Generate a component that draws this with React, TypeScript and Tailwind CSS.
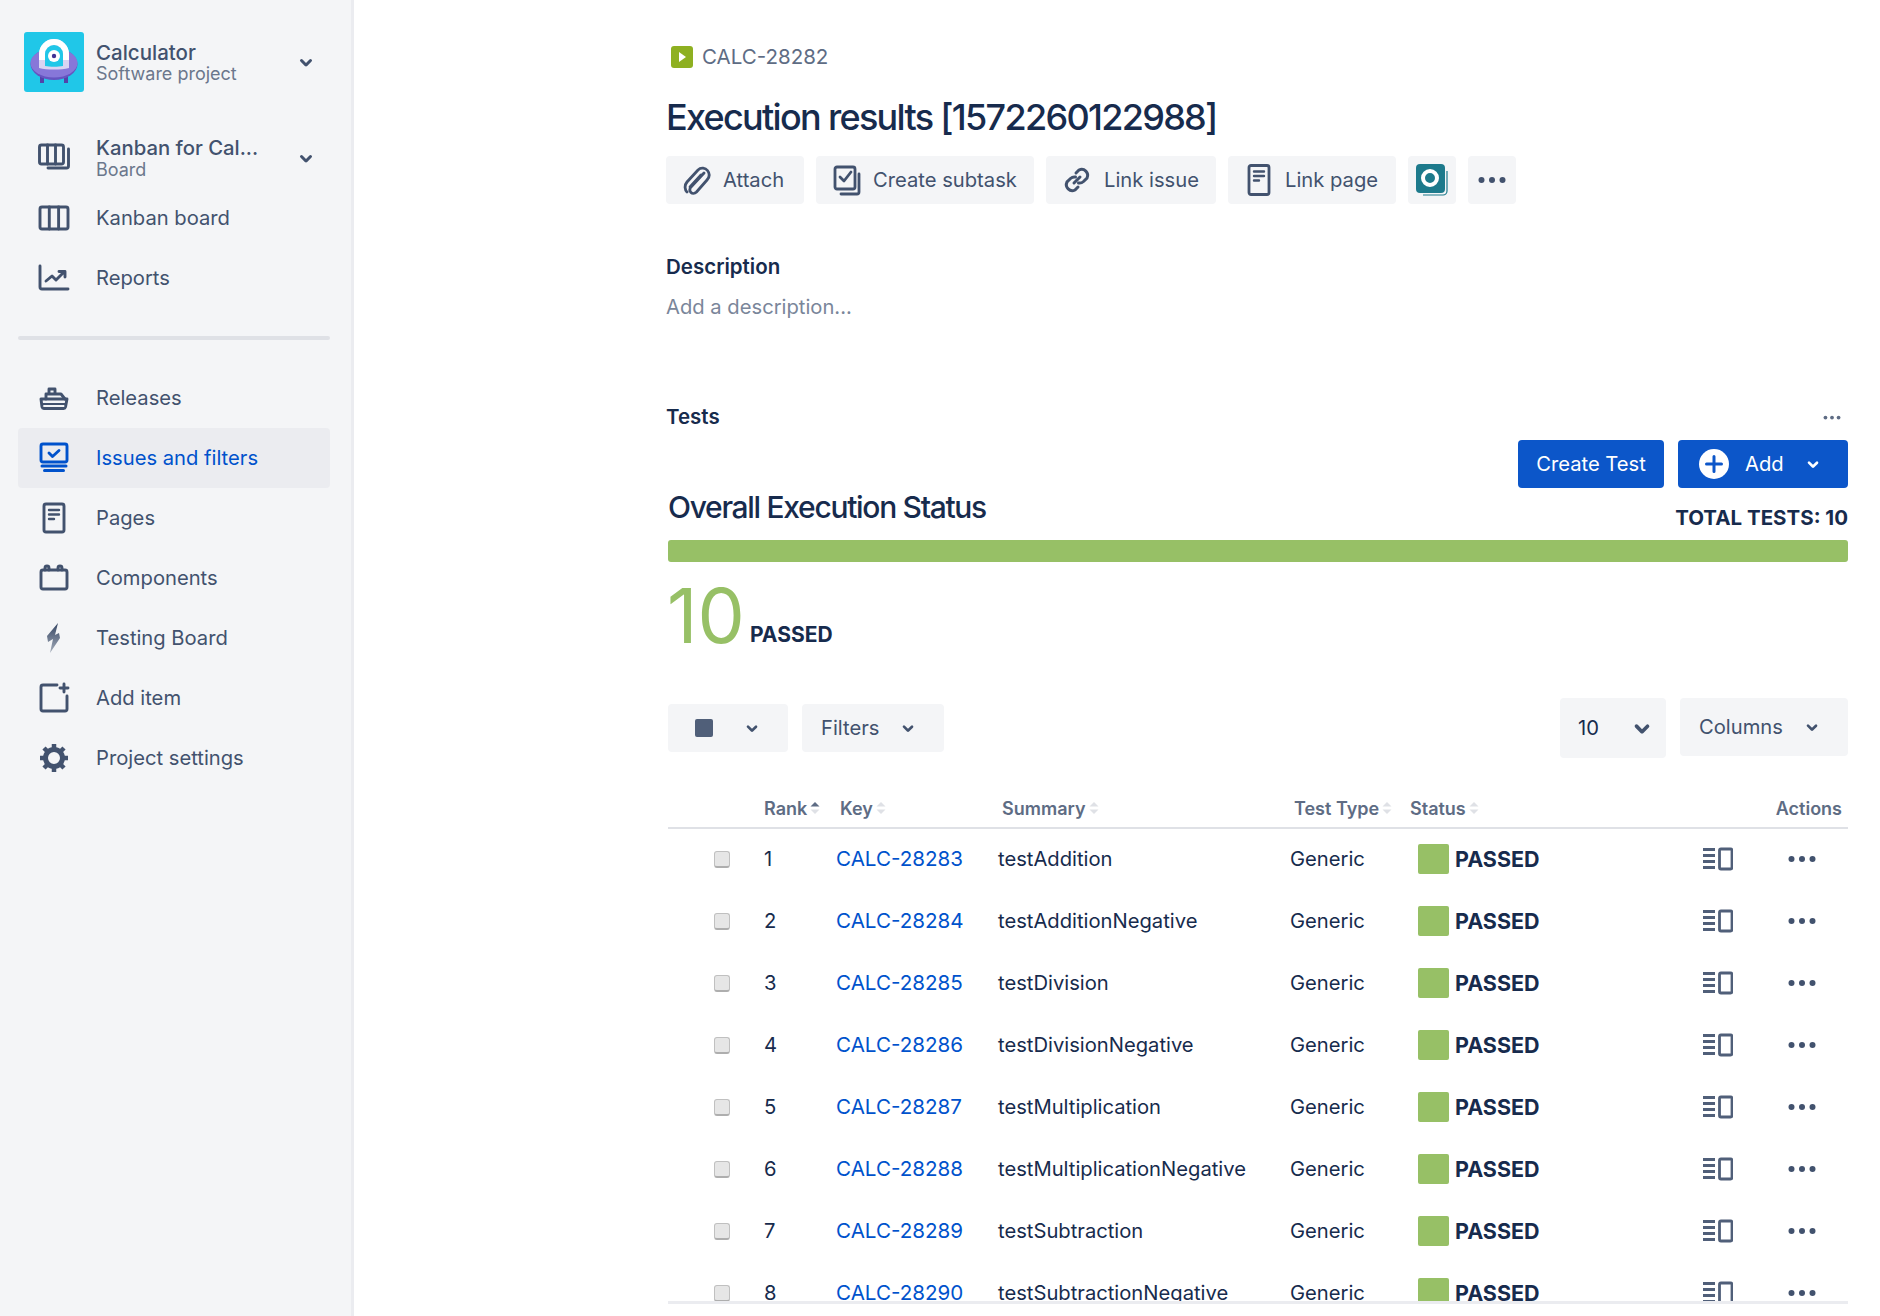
import type { ReactNode } from "react";

const font = { fontFamily: "Inter, 'Noto Sans', sans-serif" };

function Chevron({ className = "" }: { className?: string }) {
  return (
    <svg viewBox="0 0 24 24" className={className} fill="currentColor">
      <path d="M8.292 10.293a1.009 1.009 0 000 1.419l2.939 2.965c.218.215.5.322.779.322s.556-.107.769-.322l2.93-2.955a1.01 1.01 0 000-1.419.987.987 0 00-1.406 0l-2.298 2.317-2.307-2.327a.99.99 0 00-1.406 0z" />
    </svg>
  );
}

function Dots({ className = "" }: { className?: string }) {
  return (
    <svg viewBox="0 0 28 8" className={className} fill="currentColor">
      <circle cx="3.5" cy="4" r="3" />
      <circle cx="14" cy="4" r="3" />
      <circle cx="24.5" cy="4" r="3" />
    </svg>
  );
}

function Logo() {
  return (
    <svg viewBox="0 0 60 60" className="w-[60px] h-[60px] shrink-0">
      <rect width="60" height="60" rx="3" fill="#20c7e8" />
      <rect x="16" y="44" width="4" height="7" fill="#5243aa" />
      <rect x="40" y="44" width="4" height="7" fill="#5243aa" />
      <ellipse cx="30" cy="32" rx="23.5" ry="16" fill="#6554c0" />
      <ellipse cx="30" cy="31" rx="23.5" ry="14.5" fill="#8777d9" />
      <path d="M15 36V22a15 15 0 0130 0v14c-8 2-22 2-30 0z" fill="#d9d4f2" />
      <path d="M15 28V22a15 15 0 0130 0v6h-6v-6a9 9 0 00-18 0v6z" fill="#fff" />
      <path d="M21 34V22a9 9 0 0118 0v12c-5 1-13 1-18 0z" fill="#20c7e8" />
      <circle cx="30" cy="24" r="6" fill="#fff" />
      <circle cx="30" cy="24" r="2.2" fill="#403294" />
    </svg>
  );
}

const iconProps = {
  viewBox: "0 0 32 32",
  className: "w-8 h-8 shrink-0",
  fill: "none",
  stroke: "currentColor",
  strokeWidth: 2.9,
  strokeLinejoin: "round" as const,
  strokeLinecap: "round" as const,
};

const BoardStackIcon = () => (
  <svg {...iconProps}>
    <rect x="1.500" y="3" width="24" height="19" rx="2" />
    <path d="M9.500 3v19M17.500 3v19" />
    <path d="M30.500 7v17a2 2 0 01-2 2H10" />
  </svg>
);
const BoardIcon = () => (
  <svg {...iconProps}>
    <rect x="2" y="5" width="28" height="22" rx="2" />
    <path d="M11.300 5v22M20.600 5v22" />
  </svg>
);
const ReportsIcon = () => (
  <svg {...iconProps}>
    <path d="M2 4v21a2 2 0 002 2h26" />
    <path d="M8 19l6-5 4 4 8-8M21 9.500h6v5.500" />
  </svg>
);
const ShipIcon = () => (
  <svg {...iconProps}>
    <path d="M3 17h26l-1.500 8a2 2 0 01-2 1.500H6a2 2 0 01-2-1.500z" fill="none" />
    <path d="M8 17v-5h15l4 5M11 12V7h6v5" />
    <path d="M4 22h24" strokeWidth="2" />
  </svg>
);
const IssuesIcon = () => (
  <svg viewBox="0 0 32 32" className="w-8 h-8 shrink-0" fill="none" stroke="currentColor" strokeWidth="2.900" strokeLinecap="round" strokeLinejoin="round">
    <rect x="3" y="2" width="26" height="18" rx="2" />
    <path d="M11 11l3.500 3.500 6.500-6" />
    <path d="M4 24h24M6.500 28.500h19" strokeWidth="3" />
  </svg>
);
const PagesIcon = () => (
  <svg {...iconProps}>
    <rect x="6" y="2" width="20" height="28" rx="2" />
    <path d="M11 8h10M11 12.500h10M11 17h5" strokeWidth="2.400" />
  </svg>
);
const ComponentsIcon = () => (
  <svg {...iconProps}>
    <rect x="3" y="8" width="26" height="19" rx="2" />
    <path d="M7 8V6a2 2 0 014 0v2M20 8V6a2 2 0 014 0v2" />
  </svg>
);
const BoltIcon = () => (
  <svg viewBox="0 0 32 32" className="w-8 h-8 shrink-0">
    <defs>
      <linearGradient id="bolt" x1="0" y1="0" x2="0" y2="1">
        <stop offset="0" stopColor="#344563" />
        <stop offset="1" stopColor="#a5adba" />
      </linearGradient>
    </defs>
    <path d="M20 1L9 14l1 6 5-3-3 14 10-15-1-5-4 2z" fill="url(#bolt)" />
  </svg>
);
const AddItemIcon = () => (
  <svg {...iconProps}>
    <path d="M19 3H5a2 2 0 00-2 2v22a2 2 0 002 2h22a2 2 0 002-2V14" />
    <path d="M26 2v8M22 6h8" />
  </svg>
);
const GearIcon = () => (
  <svg viewBox="0 0 32 32" className="w-8 h-8 shrink-0" fill="none" stroke="currentColor">
    <circle cx="16" cy="16" r="8.500" strokeWidth="5" />
    <path d="M16 2v5M16 25v5M2 16h5M25 16h5M6 6l3.500 3.500M22.500 22.500L26 26M26 6l-3.500 3.500M9.500 22.500L6 26" strokeWidth="4.500" />
  </svg>
);

function NavRow({ icon, label, active }: { icon: ReactNode; label: string; active?: boolean }) {
  return (
    <div className={`flex items-center h-[60px] rounded-[4px] pl-[20px] ${active ? "bg-[#ebecf0] text-[#0052cc]" : "text-[#42526e]"}`}>
      {icon}
      <span className="ml-[26px] mt-px text-[20.2px]">{label}</span>
    </div>
  );
}

function ActionButton({ icon, label, className }: { icon: ReactNode; label?: string; className: string }) {
  return (
    <div className={`flex items-center h-12 rounded-[4px] bg-[#f4f5f7] text-[#42526e] text-[20.2px] ${className}`}>
      {icon}
      {label && <span>{label}</span>}
    </div>
  );
}

function SortCaret({ active }: { active?: boolean }) {
  return (
    <svg viewBox="0 0 10 12" className="w-[10px] h-3 ml-[3px]">
      <path d="M5 0l4.500 4.500h-9z" fill={active ? "#5e6c84" : "#dfe1e6"} />
      <path d="M5 12L.5 7.500h9z" fill="#dfe1e6" />
    </svg>
  );
}

function HeaderCell({ label, active }: { label: string; active?: boolean }) {
  return (
    <div className="flex items-center">
      {label}
      <SortCaret active={active} />
    </div>
  );
}

const rows = [
  ["1", "CALC-28283", "testAddition"],
  ["2", "CALC-28284", "testAdditionNegative"],
  ["3", "CALC-28285", "testDivision"],
  ["4", "CALC-28286", "testDivisionNegative"],
  ["5", "CALC-28287", "testMultiplication"],
  ["6", "CALC-28288", "testMultiplicationNegative"],
  ["7", "CALC-28289", "testSubtraction"],
  ["8", "CALC-28290", "testSubtractionNegative"],
];

function TestRow({ rank, id, summary }: { rank: string; id: string; summary: string }) {
  return (
    <div className="grid grid-cols-[96px_72px_162px_292px_128px_285px_85px_60px] items-center h-[62px] text-[20.2px] text-[#172b4d]">
      <div className="pl-[46px]">
        <div className="w-4 h-[17px] rounded-[3px] bg-[#e6e6e6] border border-[#c0c0c0] border-b-2 border-b-[#aeaeae]" />
      </div>
      <div>{rank}</div>
      <div className="text-[20.6px] text-[#0052cc]">{id}</div>
      <div>{summary}</div>
      <div>Generic</div>
      <div className="flex items-center">
        <div className="w-[31px] h-[30px] rounded-[2px] bg-[#97c066]" />
        <span className="ml-[6px] text-[21.5px] font-bold">PASSED</span>
      </div>
      <div className="text-[#505f79]">
        <svg viewBox="0 0 30 24" className="w-[30px] h-6" fill="none" stroke="currentColor" strokeWidth="2.800">
          <path d="M0 2.500h12M0 8.500h12M0 14.500h12M0 20.500h12" />
          <rect x="16.500" y="2" width="12.500" height="20" rx="1.500" />
        </svg>
      </div>
      <div className="text-[#42526e]">
        <Dots className="w-7 h-2" />
      </div>
    </div>
  );
}

export default function App() {
  return (
    <div className="flex w-[1880px] h-[1316px] overflow-hidden bg-white" style={font}>
      {/* Sidebar */}
      <aside className="w-[354px] shrink-0 bg-[#f4f5f7] border-r-[3px] border-[#ebecf0] pt-[32px] pl-[18px] pr-[21px] text-[#42526e]">
        <div className="flex items-center pl-[6px] h-[60px]">
          <Logo />
          <div className="ml-[12px] flex-1 leading-none">
            <div className="text-[20.5px] font-medium leading-[24px] mt-px">Calculator</div>
            <div className="text-[18px] text-[#6b778c] leading-[20px] mt-[-1px]">Software project</div>
          </div>
          <Chevron className="w-9 h-9 mr-[6px]" />
        </div>
        <div className="flex items-center pl-[20px] h-[60px] mt-[36px]">
          <BoardStackIcon />
          <div className="ml-[26px] flex-1">
            <div className="text-[20.3px] font-medium leading-[24px]">Kanban for Cal...</div>
            <div className="text-[18px] text-[#6b778c] leading-[20px]">Board</div>
          </div>
          <Chevron className="w-9 h-9 mr-[6px]" />
        </div>
        <div>
          <NavRow icon={<BoardIcon />} label="Kanban board" />
          <NavRow icon={<ReportsIcon />} label="Reports" />
        </div>
        <div className="h-1 rounded-[2px] bg-[#dfe1e6] mt-[28px] mb-[28px]" />
        <div className="mt-[28px]">
          <NavRow icon={<ShipIcon />} label="Releases" />
          <NavRow icon={<IssuesIcon />} label="Issues and filters" active />
          <NavRow icon={<PagesIcon />} label="Pages" />
          <NavRow icon={<ComponentsIcon />} label="Components" />
          <NavRow icon={<BoltIcon />} label="Testing Board" />
          <NavRow icon={<AddItemIcon />} label="Add item" />
          <NavRow icon={<GearIcon />} label="Project settings" />
        </div>
      </aside>

      {/* Issue content */}
      <main className="flex-1 pl-[312px] pr-[32px] pt-[43px]">
        <div className="flex items-center h-7 pl-[5px] text-[20.5px] text-[#5e6c84]">
          <svg viewBox="0 0 22 22" className="w-[22px] h-[22px] shrink-0">
            <rect width="22" height="22" rx="3" fill="#8eb021" />
            <path d="M8 6l7 5-7 5z" fill="#fff" />
          </svg>
          <span className="ml-[9px]">CALC-28282</span>
        </div>
        <h1 className="mt-[23px] text-[36px] leading-[46px] font-medium tracking-[-1.7px] text-[#172b4d] whitespace-nowrap">
          Execution results [1572260122988]
        </h1>
        <div className="flex gap-3 mt-[16px]">
          <ActionButton
            className="w-[138px] pl-[15px] gap-[12px]"
            label="Attach"
            icon={
              <svg viewBox="0 0 30 32" className="w-[30px] h-8" fill="none" stroke="currentColor" strokeWidth="2.800" strokeLinecap="round">
                <path d="M23 9L10 23c-2 2.500-1 4.500 0 5.500s3.500 1.500 5.500-.5L26 16c3-3.500 2.500-7 .5-9.500S20 3 17 6L6 18c-3 3.500-2 8 0 10" />
                <path d="M20 11L9 23" />
              </svg>
            }
          />
          <ActionButton
            className="w-[218px] pl-[15px] gap-[10px]"
            label="Create subtask"
            icon={
              <svg viewBox="0 0 32 32" className="w-8 h-8" fill="none" stroke="currentColor" strokeWidth="2.800" strokeLinejoin="round" strokeLinecap="round">
                <rect x="4" y="3" width="20" height="22" rx="2" />
                <path d="M9 13l4 4 7-9M28 10v18a2 2 0 01-2 2H10" />
              </svg>
            }
          />
          <ActionButton
            className="w-[170px] pl-[15px] gap-[11px]"
            label="Link issue"
            icon={
              <svg viewBox="0 0 32 32" className="w-8 h-8" fill="none" stroke="currentColor" strokeWidth="3" strokeLinecap="round">
                <path d="M13 19l6-6" />
                <path d="M15 9l3-3a6 6 0 018 8l-3.500 3.500a6 6 0 01-5 1.500" />
                <path d="M17 23l-3 3a6 6 0 01-8-8l3.500-3.500a6 6 0 015-1.500" />
              </svg>
            }
          />
          <ActionButton
            className="w-[168px] pl-[15px] gap-[10px]"
            label="Link page"
            icon={
              <svg viewBox="0 0 32 32" className="w-8 h-8" fill="none" stroke="currentColor" strokeWidth="2.800" strokeLinecap="round" strokeLinejoin="round">
                <rect x="6" y="1.500" width="20" height="29" rx="2" />
                <path d="M11 7.500h10M11 12h10M11 16.500h5" strokeWidth="2.400" />
              </svg>
            }
          />
          <ActionButton
            className="w-12 justify-center"
            icon={
              <svg viewBox="0 0 34 34" className="w-[34px] h-[34px]">
                <path d="M32 8v20a4 4 0 01-4 4H8" fill="none" stroke="#1d7a8c" strokeWidth="1.200" />
                <rect x="1" y="1" width="29" height="29" rx="4" fill="#1d7a8c" />
                <circle cx="15" cy="15" r="7" fill="none" stroke="#fff" strokeWidth="4" />
              </svg>
            }
          />
          <ActionButton className="w-12 justify-center" icon={<Dots className="w-7 h-2" />} />
        </div>

        <h2 className="mt-[51px] text-[20.5px] leading-6 font-semibold text-[#172b4d]">Description</h2>
        <p className="mt-[16px] text-[20.2px] leading-6 text-[#7a869a]">Add a description...</p>

        <div className="flex items-center justify-between mt-[86px] h-6">
          <h2 className="text-[20.5px] font-semibold text-[#172b4d]">Tests</h2>
          <Dots className="w-[18px] h-[5px] mr-[7px] text-[#5e6c84]" />
        </div>

        <div className="flex justify-end gap-[14px] mt-[11px]">
          <div className="flex items-center justify-center w-[146px] h-12 rounded-[4px] bg-[#0c56c9] text-white text-[20.2px]">
            Create Test
          </div>
          <div className="flex items-center w-[170px] h-12 pl-[21px] rounded-[4px] bg-[#0c56c9] text-white text-[20.2px]">
            <svg viewBox="0 0 30 30" className="w-[30px] h-[30px]">
              <circle cx="15" cy="15" r="15" fill="#fff" />
              <path d="M15 7.500v15M7.500 15h15" stroke="#0c56c9" strokeWidth="3" strokeLinecap="round" />
            </svg>
            <span className="ml-4">Add</span>
            <Chevron className="w-8 h-8 ml-[13px]" />
          </div>
        </div>

        <div className="flex items-end justify-between ml-[2px] mt-[-4px] h-[46px]">
          <h2 className="mb-1 text-[30px] leading-[38px] font-medium tracking-[-1.3px] text-[#172b4d]">Overall Execution Status</h2>
          <span className="text-[20.5px] leading-[24px] font-bold text-[#172b4d]">TOTAL TESTS: 10</span>
        </div>
        <div className="ml-[2px] mt-[10px] h-[22px] rounded-[3px] bg-[#97c066]" />
        <div className="flex items-end ml-[1px] mt-[14px] h-[80px]">
          <span className="w-[83px] text-[75px] leading-[80px] font-normal text-[#97c066]">10</span>
          <span className="mb-[9px] text-[21px] leading-6 font-bold text-[#172b4d]">PASSED</span>
        </div>

        {/* Table toolbar */}
        <div className="flex items-start justify-between ml-[2px] mt-[42px] h-[60px] text-[20.2px] text-[#42526e]">
          <div className="flex gap-[14px] mt-[6px]">
            <div className="flex items-center w-[120px] h-12 pl-[27px] rounded-[4px] bg-[#f4f5f7]">
              <div className="w-[18px] h-[18px] rounded-[2px] bg-[#505f79]" />
              <Chevron className="w-8 h-8 ml-[23px]" />
            </div>
            <div className="flex items-center w-[142px] h-12 pl-[19px] rounded-[4px] bg-[#f4f5f7]">
              Filters
              <Chevron className="w-8 h-8 ml-[13px]" />
            </div>
          </div>
          <div className="flex items-start gap-[14px]">
            <div className="flex items-center justify-between w-[106px] h-[60px] pl-[18px] pr-[2px] rounded-[4px] bg-[#f4f5f7] text-[#172b4d]">
              <span className="mt-px">10</span>
              <Chevron className="w-11 h-11 text-[#42526e]" />
            </div>
            <div className="flex items-center w-[168px] h-[58px] pl-[19px] rounded-[4px] bg-[#f4f5f7]">
              <span className="mt-px">Columns</span>
              <Chevron className="w-8 h-8 ml-[13px]" />
            </div>
          </div>
        </div>

        {/* Table */}
        <div className="ml-[2px] mt-[35px]">
          <div className="grid grid-cols-[96px_76px_162px_292px_116px_1fr_auto] items-center h-[36px] pb-1 pr-[6px] text-[18px] font-semibold text-[#5e6c84] border-b-2 border-[#dfe1e6]">
            <div />
            <HeaderCell label="Rank" active />
            <HeaderCell label="Key" />
            <HeaderCell label="Summary" />
            <HeaderCell label="Test Type" />
            <HeaderCell label="Status" />
            <div>Actions</div>
          </div>
          <div className="h-[476px] -mt-px overflow-hidden border-b-[3px] border-[#ebecf0]">
            {rows.map(([rank, id, summary]) => (
              <TestRow key={id} rank={rank} id={id} summary={summary} />
            ))}
          </div>
        </div>
      </main>
    </div>
  );
}
